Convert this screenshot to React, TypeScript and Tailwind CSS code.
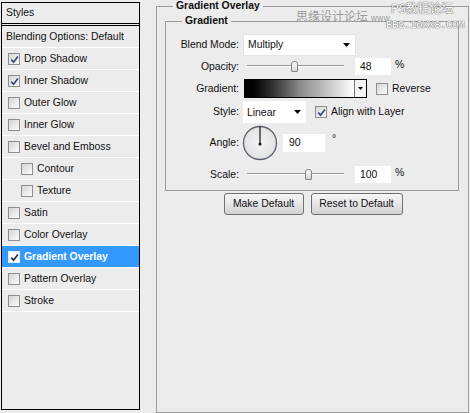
import React from "react";

function Check({ checked, onBlue }: { checked?: boolean; onBlue?: boolean }) {
  return (
    <span
      className={
        "w-[12px] h-[12px] border flex items-center justify-center shrink-0 " +
        (onBlue
          ? "border-[#dfe8f5] bg-white"
          : "border-[#8f8f8f] bg-linear-to-br from-[#d6d6d6] to-[#fbfbfb]")
      }
    >
      {checked && (
        <svg width="9" height="9" viewBox="0 0 9 9">
          <path d="M1.2 4.6 L3.6 7.2 L7.9 1.4" stroke={onBlue ? "#2a2f45" : "#3b4a78"} strokeWidth="1.7" fill="none" />
        </svg>
      )}
    </span>
  );
}

function Row({
  label,
  checked,
  indent,
  selected,
}: {
  label: string;
  checked?: boolean;
  indent?: boolean;
  selected?: boolean;
}) {
  return (
    <div
      className={
        "h-[22px] border-b border-white flex items-center gap-[4px] pt-[1px] " +
        (indent ? "pl-[19px] " : "pl-[6px] ") +
        (selected ? "bg-[#3399ff] text-white font-bold" : "")
      }
    >
      <Check checked={checked} onBlue={selected} />
      <span>{label}</span>
    </div>
  );
}

function Slider({ pos }: { pos: number }) {
  return (
    <div className="relative w-[97px] h-[17px] ml-[8px]">
      <div className="absolute left-0 right-0 top-[7px] h-[2px] border-t border-[#9a9a9a] border-b border-b-white" />
      <div
        className="absolute top-[3px] w-[7px] h-[11px] rounded-t-[3px] rounded-b-[1px] border border-[#858585] bg-linear-to-b from-white to-[#d4d4d4]"
        style={{ left: pos }}
      />
    </div>
  );
}

function Arrow() {
  return (
    <svg width="7" height="4" viewBox="0 0 7 4">
      <path d="M0 0 H7 L3.5 4 Z" fill="#000" />
    </svg>
  );
}

export default function App() {
  return (
    <div className="relative w-[470px] h-[413px] bg-[#ececec] flex text-[10.4px] leading-[12px] text-[#111] font-[family-name:Liberation_Sans,Arial,sans-serif] overflow-hidden">
      {/* left styles list */}
      <div className="ml-[1px] mt-[2px] w-[139px] h-[408px] border border-black flex flex-col">
        <div className="h-[21px] flex items-center pl-[4px] border-b border-black">Styles</div>
        <div className="h-[1px]" />
        <div className="h-[23px] flex items-center pl-[4px] pt-[1px] border-t border-black border-b border-b-white">
          Blending Options: Default
        </div>
        <Row label="Drop Shadow" checked />
        <Row label="Inner Shadow" checked />
        <Row label="Outer Glow" />
        <Row label="Inner Glow" />
        <Row label="Bevel and Emboss" />
        <Row label="Contour" indent />
        <Row label="Texture" indent />
        <Row label="Satin" />
        <Row label="Color Overlay" />
        <Row label="Gradient Overlay" checked selected />
        <Row label="Pattern Overlay" />
        <Row label="Stroke" />
      </div>

      {/* right panel */}
      <fieldset className="ml-[16px] mt-[0px] w-[313px] h-[413px] border border-[#9c9c9c] flex flex-col">
        <legend className="ml-[16px] px-[3px] font-bold leading-[12px]">Gradient Overlay</legend>
        <fieldset className="ml-[8px] mt-[3px] w-[294px] h-[176px] border border-[#9c9c9c]">
          <legend className="ml-[16px] px-[3px] font-bold leading-[12px]">Gradient</legend>
          <div className="flex flex-col">
            {/* Blend mode */}
            <div className="mt-[7px] h-[22px] flex items-center">
              <div className="w-[73px] text-right">Blend Mode:</div>
              <div className="ml-[4px] w-[113px] h-[22px] bg-white border border-[#e4e4e4] flex items-center justify-between pl-[4px] pr-[5px]">
                <span>Multiply</span>
                <Arrow />
              </div>
            </div>
            {/* Opacity */}
            <div className="mt-[2px] h-[17px] flex items-center">
              <div className="w-[73px] text-right">Opacity:</div>
              <Slider pos={44} />
              <div className="ml-[11px] w-[36px] h-[17px] bg-white flex items-center pl-[5px]">48</div>
              <span className="ml-[4px] -mt-[4px]">%</span>
            </div>
            {/* Gradient */}
            <div className="mt-[4px] h-[19px] flex items-center">
              <div className="w-[73px] text-right">Gradient:</div>
              <div className="ml-[5px] h-[19px] flex border border-black">
                <div className="w-[109px] h-full bg-linear-to-r from-black via-[#8a8a8a] to-white" />
                <div className="w-[12px] h-full bg-[#f4f4f4] border-l border-[#777] flex items-center justify-center">
                  <svg width="5" height="3" viewBox="0 0 5 3">
                    <path d="M0 0 H5 L2.5 3 Z" fill="#000" />
                  </svg>
                </div>
              </div>
              <div className="ml-[9px] flex items-center gap-[4px]">
                <Check />
                <span>Reverse</span>
              </div>
            </div>
            {/* Style */}
            <div className="mt-[3px] h-[22px] flex items-center">
              <div className="w-[73px] text-right">Style:</div>
              <div className="ml-[4px] w-[63px] h-[22px] bg-white flex items-center justify-between pl-[4px] pr-[5px]">
                <span className="mt-[2px]">Linear</span>
                <Arrow />
              </div>
              <div className="ml-[9px] flex items-center gap-[4px]">
                <Check checked />
                <span>Align with Layer</span>
              </div>
            </div>
            {/* Angle */}
            <div className="mt-[1px] h-[37px] flex items-center">
              <div className="w-[73px] text-right">Angle:</div>
              <svg className="ml-[3px]" width="36" height="36" viewBox="0 0 36 36">
                <defs>
                  <radialGradient id="dial" cx="0.5" cy="0.5" r="0.5">
                    <stop offset="0" stopColor="#f4f4f4" />
                    <stop offset="1" stopColor="#e2e2e2" />
                  </radialGradient>
                </defs>
                <circle cx="18" cy="18" r="16.5" fill="url(#dial)" stroke="#5d6270" strokeWidth="1.3" />
                <line x1="18" y1="1.5" x2="18" y2="19" stroke="#111" strokeWidth="1.2" />
                <circle cx="18" cy="19" r="1.5" fill="#111" />
              </svg>
              <div className="ml-[5px] w-[42px] h-[18px] bg-white flex items-center pl-[6px]">90</div>
              <span className="ml-[7px] -mt-[8px]">°</span>
            </div>
            {/* Scale */}
            <div className="mt-[5px] h-[17px] flex items-center">
              <div className="w-[73px] text-right">Scale:</div>
              <Slider pos={58} />
              <div className="ml-[11px] w-[36px] h-[17px] bg-white flex items-center pl-[5px]">100</div>
              <span className="ml-[4px] -mt-[4px]">%</span>
            </div>
          </div>
        </fieldset>
        <div className="mt-[2px] flex justify-center gap-[7px] pl-[1px]">
          <button className="w-[80px] h-[22px] rounded-[3px] border border-[#707070] bg-linear-to-b from-[#f6f6f6] via-[#e6e6e6] to-[#d2d2d2]">
            Make Default
          </button>
          <button className="w-[92px] h-[22px] rounded-[3px] border border-[#707070] bg-linear-to-b from-[#f6f6f6] via-[#e6e6e6] to-[#d2d2d2]">
            Reset to Default
          </button>
        </div>
      </fieldset>

      {/* watermark */}
      <div className="absolute left-[296px] top-[9px] text-[12px] leading-[14px] text-[#9a9a9a] font-[family-name:Noto_Sans_CJK_SC,sans-serif]">
        思缘设计论坛 <span className="text-[8px]">www.</span>
      </div>
      <div className="absolute left-[391px] top-[1px] text-[12px] leading-[14px] text-white [text-shadow:0_0_1px_#555,0_0_1px_#555] font-[family-name:Noto_Sans_CJK_SC,sans-serif]">
        PS教程论坛
      </div>
      <div className="absolute left-[386px] top-[19px] text-[11px] leading-[12px] text-white [text-shadow:0_0_1px_#555,0_0_1px_#555] font-[family-name:Liberation_Mono,monospace] tracking-[-0.6px]">
        BBS.16XX8.COM
      </div>
    </div>
  );
}
